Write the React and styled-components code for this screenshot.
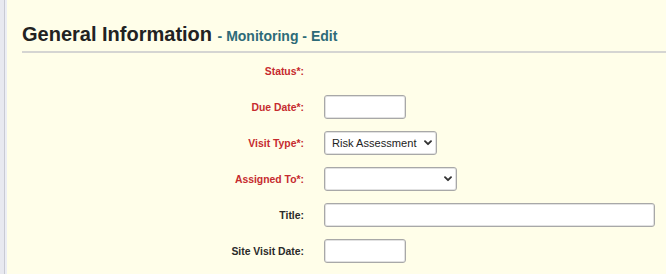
import styled, { createGlobalStyle } from 'styled-components';

const GlobalStyle = createGlobalStyle`
  html, body {
    margin: 0;
    padding: 0;
    background: #fffee9;
  }
  body {
    font-family: 'Liberation Sans', Arial, sans-serif;
  }
`;

const fields = [
  { label: 'Status*:', required: true },
  { label: 'Due Date*:', required: true, kind: 'input', width: 82 },
  { label: 'Visit Type*:', required: true, kind: 'select', width: 113, value: 'Risk Assessment' },
  { label: 'Assigned To*:', required: true, kind: 'select', width: 133, value: '' },
  { label: 'Title:', kind: 'input', width: 331 },
  { label: 'Site Visit Date:', kind: 'input', width: 82 },
];

function Chevron() {
  return (
    <svg width="8" height="6" viewBox="0 0 8 6">
      <path d="M1 1.2l3 3 3-3" fill="none" stroke="#333" strokeWidth="1.9" strokeLinecap="round" strokeLinejoin="round" />
    </svg>
  );
}

function Field({ field }) {
  if (field.kind === 'input') {
    return <TextBox $width={field.width} />;
  }
  if (field.kind === 'select') {
    return (
      <SelectWrap $width={field.width}>
        <Select defaultValue={field.value}>
          <option value={field.value}>{field.value}</option>
        </Select>
        <Arrow>
          <Chevron />
        </Arrow>
      </SelectWrap>
    );
  }
  return <span />;
}

export default function App() {
  return (
    <>
      <GlobalStyle />
      <Page>
        <Sidebar />
        <Main>
          <Heading>
            General Information <Sub>- Monitoring - Edit</Sub>
          </Heading>
          <Form>
            {fields.map((f) => (
              <Row key={f.label}>
                <Label $required={f.required}>{f.label}</Label>
                <Field field={f} />
              </Row>
            ))}
          </Form>
        </Main>
      </Page>
    </>
  );
}

const Page = styled.div`
  display: flex;
  min-height: 274px;
  overflow: hidden;
`;

const Sidebar = styled.div`
  width: 7px;
  flex-shrink: 0;
  background: linear-gradient(
    to right,
    #e8e9f0 0,
    #e8e9f0 4px,
    #c9cad3 4px,
    #c9cad3 5px,
    #eceef4 5px
  );
`;

const Main = styled.div`
  flex: 1;
  background: #fffee9;
  padding-left: 15px;
`;

const Heading = styled.h1`
  margin: 23px 0 0;
  padding-bottom: 4px;
  border-bottom: 2px solid #d5d5d2;
  font-size: 20px;
  line-height: 22px;
  font-weight: bold;
  color: #222;
  white-space: nowrap;
`;

const Sub = styled.span`
  font-size: 14px;
  color: #2d6b78;
`;

const Form = styled.div`
  display: grid;
  grid-template-columns: 282px 1fr;
  grid-auto-rows: 36px;
  column-gap: 20px;
`;

const Row = styled.div`
  display: contents;
`;

const Label = styled.div`
  align-self: center;
  text-align: right;
  font-size: 10.4px;
  font-weight: bold;
  color: ${(p) => (p.$required ? '#c62b2f' : '#2a2a2a')};
`;

const TextBox = styled.input.attrs({ type: 'text' })`
  align-self: center;
  box-sizing: border-box;
  width: ${(p) => p.$width}px;
  height: 24px;
  margin: 0;
  border: 1px solid #a8a8a8;
  border-radius: 3px;
  background: #fff;
  box-shadow: inset 0 0 0 1px #e2e2e2;
`;

const SelectWrap = styled.div`
  align-self: center;
  position: relative;
  width: ${(p) => p.$width}px;
  height: 24px;
`;

const Select = styled.select`
  appearance: none;
  box-sizing: border-box;
  width: 100%;
  height: 24px;
  margin: 0;
  padding: 0 18px 0 7px;
  border: 1px solid #a8a8a8;
  border-radius: 3px;
  background: #fff;
  box-shadow: inset 0 0 0 1px #e2e2e2;
  font-family: 'Liberation Sans', Arial, sans-serif;
  font-size: 11.1px;
  color: #222;
`;

const Arrow = styled.span`
  position: absolute;
  right: 5px;
  top: 9px;
  display: flex;
  pointer-events: none;
`;
